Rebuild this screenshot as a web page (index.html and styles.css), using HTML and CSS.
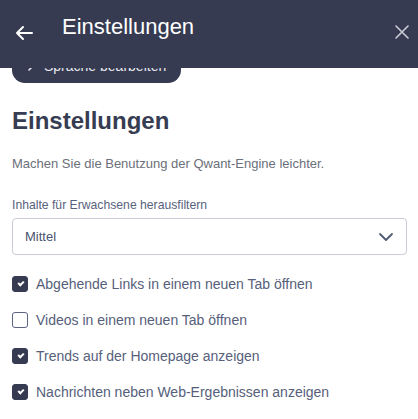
FILE: index.html
```html
<!DOCTYPE html>
<html lang="de">

<head>
  <meta charset="UTF-8" />
  <meta name="viewport" content="width=device-width, initial-scale=1.0" />
  <title>Einstellungen</title>
  <link rel="stylesheet" href="styles.css">
</head>

<body>
  <header class="topbar">
    <button class="icon-btn back" aria-label="Zurück">
      <svg width="18" height="16" viewBox="0 0 18 16" fill="none" stroke="#ffffff" stroke-width="2" stroke-linecap="round" stroke-linejoin="round">
        <path d="M17 8H2M8 2L2 8l6 6" />
      </svg>
    </button>
    <div class="topbar-title">Einstellungen</div>
    <button class="icon-btn close" aria-label="Schließen">
      <svg width="14" height="14" viewBox="0 0 14 14" fill="none" stroke="#c9ccd6" stroke-width="1.6" stroke-linecap="round">
        <path d="M1 1l12 12M13 1L1 13" />
      </svg>
    </button>
  </header>

  <main class="content">
    <button class="lang-btn">
      <svg width="8" height="10" viewBox="0 0 8 10" fill="none" stroke="#e6e8ee" stroke-width="1.6" stroke-linecap="round" stroke-linejoin="round">
        <path d="M2 1l4 4-4 4" />
      </svg>
      Sprache bearbeiten
    </button>

    <h1 class="heading">Einstellungen</h1>
    <p class="intro">Machen Sie die Benutzung der Qwant-Engine leichter.</p>

    <label class="field-label">Inhalte für Erwachsene herausfiltern</label>
    <div class="select">
      <span>Mittel</span>
      <svg width="16" height="10" viewBox="0 0 16 10" fill="none" stroke="#4f5a74" stroke-width="1.8" stroke-linecap="round" stroke-linejoin="round">
        <path d="M2 2l6 6 6-6" />
      </svg>
    </div>

    <ul class="options">
      <li class="option"><span class="box checked"></span>Abgehende Links in einem neuen Tab öffnen</li>
      <li class="option"><span class="box"></span>Videos in einem neuen Tab öffnen</li>
      <li class="option"><span class="box checked"></span>Trends auf der Homepage anzeigen</li>
      <li class="option"><span class="box checked"></span>Nachrichten neben Web-Ergebnissen anzeigen</li>
    </ul>
  </main>
</body>

</html>
```

FILE: styles.css
```css
body {
  margin: 0;
  background: #ffffff;
  font-family: "Liberation Sans", Arial, sans-serif;
  color: #363c52;
}

.topbar {
  position: fixed;
  top: 0;
  left: 0;
  right: 0;
  height: 68px;
  background: #363b52;
  display: flex;
  align-items: center;
  padding-bottom: 14px;
  box-sizing: border-box;
  z-index: 10;
}

.icon-btn {
  background: none;
  border: 0;
  padding: 0;
  display: flex;
  align-items: center;
  justify-content: center;
  cursor: pointer;
}

.back {
  width: 18px;
  margin-left: 15px;
  margin-top: 12px;
}

.topbar-title {
  color: #ffffff;
  font-size: 22px;
  margin-left: 29px;
  flex: 1;
}

.close {
  width: 14px;
  margin-right: 9px;
  margin-top: 10px;
}

.content {
  padding: 48px 11px 0 12px;
}

.lang-btn {
  display: flex;
  align-items: center;
  gap: 9px;
  height: 35px;
  width: 169px;
  padding: 0 0 0 15px;
  border: 0;
  border-radius: 13px;
  background: #363b52;
  color: #e6e8ee;
  font-family: "Liberation Sans", Arial, sans-serif;
  font-size: 14px;
}

.heading {
  margin: 24px 0 0;
  font-size: 24px;
  font-weight: bold;
  line-height: 28px;
  color: #363c52;
}

.intro {
  margin: 20px 0 0;
  font-size: 13px;
  line-height: 18px;
  color: #6b6f7a;
}

.field-label {
  display: block;
  margin-top: 24px;
  font-size: 12.2px;
  line-height: 16px;
  color: #58627d;
}

.select {
  margin-top: 5px;
  height: 37px;
  box-sizing: border-box;
  border: 1px solid #c9ccd6;
  border-radius: 4px;
  display: flex;
  align-items: center;
  justify-content: space-between;
  padding: 0 12px 0 12px;
  font-size: 13px;
  color: #4a5470;
}

.options {
  list-style: none;
  margin: 11px 0 0;
  padding: 0;
}

.option {
  display: flex;
  align-items: center;
  gap: 8px;
  height: 36px;
  font-size: 14px;
  color: #56607b;
}

.box {
  width: 16px;
  height: 16px;
  box-sizing: border-box;
  border: 1.5px solid #5b6480;
  border-radius: 3px;
  flex: none;
  position: relative;
}

.box.checked {
  background: #363b52;
  border-color: #363b52;
}

.box.checked::after {
  content: "";
  position: absolute;
  left: 5px;
  top: 4px;
  width: 4px;
  height: 2px;
  border-left: 2px solid #ffffff;
  border-bottom: 2px solid #ffffff;
  transform: rotate(-45deg);
}
```
